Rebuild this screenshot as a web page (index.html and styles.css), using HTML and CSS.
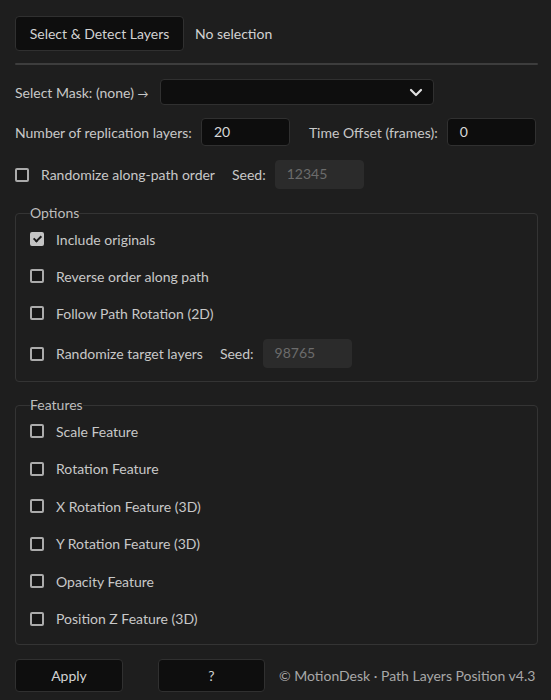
FILE: index.html
```html
<!DOCTYPE html>
<html lang="en">
<head>
    <meta charset="UTF-8">
    <meta name="viewport" content="width=device-width, initial-scale=1.0">
    <title>Path Layers Position</title>
    <link rel="stylesheet" href="styles.css">
</head>
<body>
    <div class="panel">
        <div class="row top-row">
            <button class="btn btn-detect">Select &amp; Detect Layers</button>
            <span class="selection-info">No selection</span>
        </div>

        <div class="separator"></div>

        <div class="row mask-row">
            <span class="label">Select Mask: (none) <span class="arrow">&rarr;</span></span>
            <div class="dropdown">
                <svg class="chevron" width="14" height="9" viewBox="0 0 14 9">
                    <path d="M2 2 L7 7 L12 2" fill="none" stroke="#e0e0e0" stroke-width="2.2" stroke-linecap="round" stroke-linejoin="round"/>
                </svg>
            </div>
        </div>

        <div class="row number-row">
            <span class="label">Number of replication layers:</span>
            <div class="input">20</div>
            <span class="label offset-label">Time Offset (frames):</span>
            <div class="input">0</div>
        </div>

        <div class="row check-row random-row">
            <span class="checkbox"></span>
            <span class="label">Randomize along-path order</span>
            <span class="label seed-label">Seed:</span>
            <div class="input input-disabled">12345</div>
        </div>

        <fieldset class="group options">
            <legend>Options</legend>
            <div class="check-row"><span class="checkbox checked"></span><span class="label">Include originals</span></div>
            <div class="check-row"><span class="checkbox"></span><span class="label">Reverse order along path</span></div>
            <div class="check-row"><span class="checkbox"></span><span class="label">Follow Path Rotation (2D)</span></div>
            <div class="check-row">
                <span class="checkbox"></span>
                <span class="label">Randomize target layers</span>
                <span class="label seed-label">Seed:</span>
                <div class="input input-disabled">98765</div>
            </div>
        </fieldset>

        <fieldset class="group features">
            <legend>Features</legend>
            <div class="check-row"><span class="checkbox"></span><span class="label">Scale Feature</span></div>
            <div class="check-row"><span class="checkbox"></span><span class="label">Rotation Feature</span></div>
            <div class="check-row"><span class="checkbox"></span><span class="label">X Rotation Feature (3D)</span></div>
            <div class="check-row"><span class="checkbox"></span><span class="label">Y Rotation Feature (3D)</span></div>
            <div class="check-row"><span class="checkbox"></span><span class="label">Opacity Feature</span></div>
            <div class="check-row"><span class="checkbox"></span><span class="label">Position Z Feature (3D)</span></div>
        </fieldset>

        <div class="row bottom-row">
            <button class="btn btn-apply">Apply</button>
            <button class="btn btn-help">?</button>
            <span class="credits">&copy; MotionDesk &middot; Path Layers Position v4.3</span>
        </div>
    </div>
</body>
</html>
```

FILE: styles.css
```css
body {
    margin: 0;
    background-color: #1e1e1e;
    font-family: Lato, "Open Sans", sans-serif;
    font-size: 14px;
    color: #c8c8c8;
}

.panel {
    padding: 16px 13px 0 15px;
}

.row {
    display: flex;
    align-items: center;
}

.label {
    white-space: nowrap;
}

.arrow {
    font-size: 11px;
}

.btn {
    background-color: #0e0e0e;
    color: #d2d2d2;
    border: 1px solid #303030;
    border-radius: 4px;
    font-family: inherit;
    font-size: 14px;
    padding: 0;
    cursor: pointer;
}

.btn-detect {
    width: 169px;
    height: 35px;
}

.selection-info {
    margin-left: 11px;
    color: #d2d2d2;
}

.separator {
    height: 2px;
    background-color: #3d3d3d;
    margin-top: 12px;
    border-radius: 1px;
}

.mask-row {
    margin-top: 14px;
}

.dropdown {
    width: 274px;
    height: 26px;
    box-sizing: border-box;
    margin-left: 11px;
    background-color: #0e0e0e;
    border: 1px solid #303030;
    border-radius: 4px;
    display: flex;
    align-items: center;
    justify-content: flex-end;
    padding-right: 10px;
}

.number-row {
    margin-top: 13px;
}

.input {
    width: 89px;
    height: 28px;
    box-sizing: border-box;
    margin-left: 9px;
    background-color: #0d0d0d;
    border: 1px solid #303030;
    border-radius: 4px;
    padding-left: 12px;
    line-height: 26px;
    color: #d8d8d8;
    flex-shrink: 0;
}

.offset-label {
    margin-left: 19px;
}

.random-row {
    margin-top: 14px;
}

.check-row {
    display: flex;
    align-items: center;
    min-height: 22px;
}

.checkbox {
    width: 14px;
    height: 14px;
    box-sizing: border-box;
    border: 2px solid #ababab;
    border-radius: 2px;
    background-color: #161616;
    margin-right: 12px;
    flex-shrink: 0;
    position: relative;
}

.checkbox.checked {
    background-color: #c4c4c4;
    border-color: #c4c4c4;
}

.checkbox.checked::after {
    content: "";
    position: absolute;
    left: 3px;
    top: 0px;
    width: 3px;
    height: 6px;
    border: solid #1a1a1a;
    border-width: 0 2px 2px 0;
    transform: rotate(45deg);
}

.seed-label {
    margin-left: 17px;
}

.seed-label + .input {
    margin-left: 9px;
}

.input-disabled {
    height: 29px;
    background-color: #2b2b2b;
    border-color: #2b2b2b;
    padding-left: 11px;
    color: #6c6c6c;
}

.group {
    margin: 15px 0 0 0;
    padding: 6px 14px 13px 14px;
    border: 1px solid #343434;
    border-radius: 4px;
    display: flex;
    flex-direction: column;
    gap: 15px;
}

.group legend {
    padding: 0;
    line-height: 18px;
    color: #bdbdbd;
}

.features {
    margin-top: 14px;
    gap: 15.5px;
    padding-bottom: 14px;
}

.bottom-row {
    margin-top: 14px;
}

.btn-apply {
    width: 108px;
    height: 33px;
}

.btn-help {
    width: 107px;
    height: 33px;
    margin-left: 35px;
}

.credits {
    margin-left: 14px;
    color: #a8a8a8;
    white-space: nowrap;
}
```
